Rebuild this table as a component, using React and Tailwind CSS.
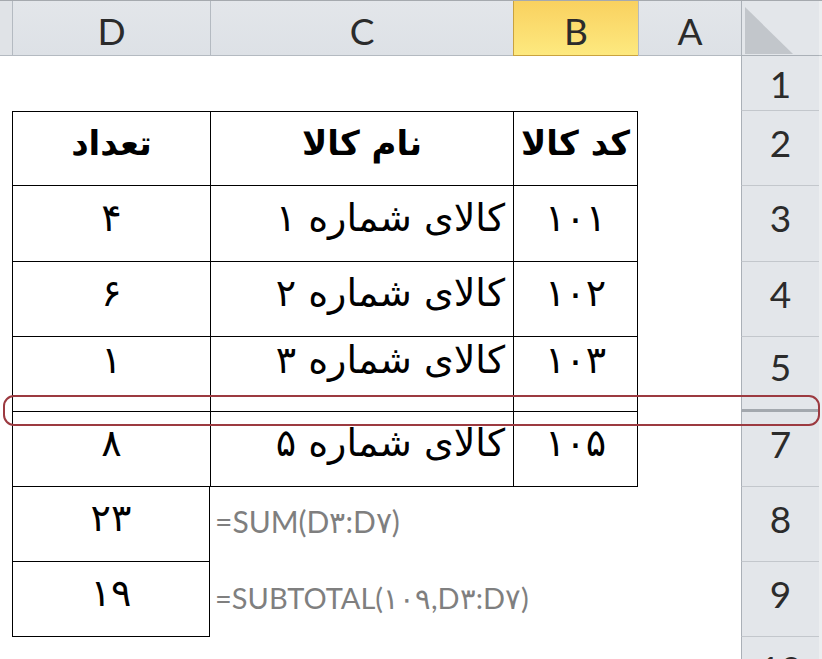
import React from 'react';

const fa = { fontFamily: '"DejaVu Sans", sans-serif' };
const lat = { fontFamily: 'Lato, "Open Sans", sans-serif' };

function ColHead({ w, label, active }) {
  return (
    <div
      className={`${w} flex items-center justify-center border-b border-l text-[37px] leading-none ${
        active
          ? 'border-[#c9a23f] bg-gradient-to-b from-[#f9d15f] to-[#fde97f] text-[#2b2b2b]'
          : 'border-[#b4bac1] bg-gradient-to-b from-[#e3e6ea] to-[#dde1e6] text-[#2b2b2b]'
      }`}
      style={lat}
    >
      <span className="pt-1">{label}</span>
    </div>
  );
}

function RowHead({ h, n, thick, open, lift }) {
  let edge = 'border-b border-b-[#c3c7cc]';
  if (thick) edge = 'border-b-[3px] border-b-[#a3a8ae]';
  if (open) edge = '';
  return (
    <div
      className={`${h} flex w-[78px] shrink-0 items-center justify-center border-l border-[#aab0b7] bg-[#e3e6ea] text-[37px] leading-none text-[#2b2b2b] ${edge} ${lift ? 'pb-3' : ''}`}
      style={lat}
    >
      {n}
    </div>
  );
}

// table cell, black grid lines like the sheet's borders
function Cell({ w, children, bold, align = 'center', top, last, strip }) {
  return (
    <div
      className={`${w} flex shrink-0 border-b border-l border-black ${top ? 'border-t' : ''} ${last ? 'border-r' : ''} ${
        align === 'right' ? 'justify-end pr-2' : 'justify-center'
      } ${strip ? '' : 'items-center pb-3'} ${bold ? 'text-[34px] font-bold' : 'text-[38px]'} leading-none text-black`}
      style={fa}
    >
      {children && <span dir="rtl">{children}</span>}
    </div>
  );
}

function Row({ h, n, thick, open, lift, children }) {
  return (
    <div className={`flex ${h}`}>
      <div className="w-[12px] shrink-0" />
      <div className="flex w-[729px] shrink-0">{children}</div>
      <RowHead h={h} n={n} thick={thick} open={open} lift={lift} />
      <div className="w-[3px] bg-[#eceef0]" />
    </div>
  );
}

const items = [
  { n: 3, h: 'h-[76px]', code: '۱۰۱', name: 'کالای شماره ۱', qty: '۴' },
  { n: 4, h: 'h-[75px]', code: '۱۰۲', name: 'کالای شماره ۲', qty: '۶' },
];

export default function App() {
  return (
    <div className="relative h-[659px] w-[822px] overflow-hidden bg-white">
      {/* column headers */}
      <div className="flex h-[56px] border-t border-[#a5a9ae]">
        <div className="w-[12px] border-b border-[#b4bac1] bg-[#e0e3e7]" />
        <ColHead w="w-[198px]" label="D" />
        <ColHead w="w-[303px]" label="C" />
        <ColHead w="w-[125px]" label="B" active />
        <ColHead w="w-[103px]" label="A" />
        <div className="relative w-[78px] border-b border-l border-[#aab0b7] bg-[#e3e6ea]">
          <svg className="absolute left-[3px] top-[6px]" width="48" height="47" viewBox="0 0 48 47">
            <polygon points="0,0 0,47 48,47" fill="#c2c6cb" />
          </svg>
        </div>
        <div className="w-[3px] border-b border-[#b4bac1] bg-[#eceef0]" />
      </div>

      <Row h="h-[55px]" n="1" />

      <Row h="h-[75px]" n="2" lift>
        <Cell w="w-[198px]" bold top>تعداد</Cell>
        <Cell w="w-[303px]" bold top>نام کالا</Cell>
        <Cell w="w-[125px]" bold top last>کد کالا</Cell>
      </Row>

      {items.map((it) => (
        <Row key={it.n} h={it.h} n={it.n} lift>
          <Cell w="w-[198px]">{it.qty}</Cell>
          <Cell w="w-[303px]" align="right">{it.name}</Cell>
          <Cell w="w-[125px]" last>{it.code}</Cell>
        </Row>
      ))}

      <Row h="h-[59px]" n="5" open>
        <Cell w="w-[198px]">۱</Cell>
        <Cell w="w-[303px]" align="right">کالای شماره ۳</Cell>
        <Cell w="w-[125px]" last>۱۰۳</Cell>
      </Row>

      {/* hidden row 6 */}
      <Row h="h-[16px]" n="" thick>
        <Cell w="w-[198px]" strip />
        <Cell w="w-[303px]" strip />
        <Cell w="w-[125px]" strip last />
      </Row>

      <Row h="h-[75px]" n="7" lift>
        <Cell w="w-[198px]">۸</Cell>
        <Cell w="w-[303px]" align="right">کالای شماره ۵</Cell>
        <Cell w="w-[125px]" last>۱۰۵</Cell>
      </Row>

      <Row h="h-[75px]" n="8" lift>
        <Cell w="w-[198px]" last>۲۳</Cell>
        <div className="flex items-center pb-2 pl-[5px] text-[30px] leading-none whitespace-nowrap text-[#7f7f7f]" style={lat}>
          =SUM(D۳:D۷)
        </div>
      </Row>

      <Row h="h-[75px]" n="9" lift>
        <Cell w="w-[198px]" last>۱۹</Cell>
        <div className="flex items-center pb-1 pl-[5px] text-[29px] leading-none whitespace-nowrap text-[#7f7f7f]" style={lat}>
          =SUBTOTAL(۱۰۹,D۳:D۷)
        </div>
      </Row>

      <Row h="h-[75px]" n="10" lift />

      {/* highlight around the hidden row */}
      <div className="pointer-events-none absolute left-[3px] top-[395px] h-[31px] w-[817px] rounded-[11px] border-2 border-[#9c3a40]" />
    </div>
  );
}
